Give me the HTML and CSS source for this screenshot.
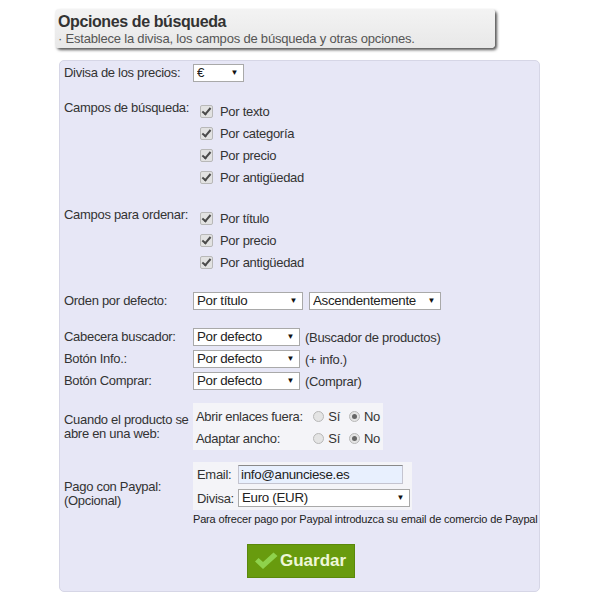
FILE: index.html
```html
<!DOCTYPE html>
<html lang="es">
<head>
    <meta charset="UTF-8">
    <meta name="viewport" content="width=device-width, initial-scale=1.0">
    <title>Opciones de búsqueda</title>
    <link rel="stylesheet" href="styles.css">
</head>
<body>
    <div class="page">
        <div class="header">
            <h2>Opciones de búsqueda</h2>
            <p>· Establece la divisa, los campos de búsqueda y otras opciones.</p>
        </div>

        <form class="panel">
            <div class="row">
                <label class="lbl">Divisa de los precios:</label>
                <div class="ctl">
                    <span class="sel w-eur"><select><option>€</option></select></span>
                </div>
            </div>

            <div class="row group first">
                <label class="lbl">Campos de búsqueda:</label>
                <div class="checks">
                    <label class="check"><span class="box"></span>Por texto</label>
                    <label class="check"><span class="box"></span>Por categoría</label>
                    <label class="check"><span class="box"></span>Por precio</label>
                    <label class="check"><span class="box"></span>Por antigüedad</label>
                </div>
            </div>

            <div class="row group">
                <label class="lbl">Campos para ordenar:</label>
                <div class="checks">
                    <label class="check"><span class="box"></span>Por título</label>
                    <label class="check"><span class="box"></span>Por precio</label>
                    <label class="check"><span class="box"></span>Por antigüedad</label>
                </div>
            </div>

            <div class="row group order">
                <label class="lbl">Orden por defecto:</label>
                <div class="ctl">
                    <span class="sel w-title"><select><option>Por título</option></select></span>
                    <span class="sel w-asc"><select><option>Ascendentemente</option></select></span>
                </div>
            </div>

            <div class="row group">
                <label class="lbl">Cabecera buscador:</label>
                <div class="ctl">
                    <span class="sel w-def"><select><option>Por defecto</option></select></span>
                    <span class="hint">(Buscador de productos)</span>
                </div>
            </div>
            <div class="row tight">
                <label class="lbl">Botón Info.:</label>
                <div class="ctl">
                    <span class="sel w-def"><select><option>Por defecto</option></select></span>
                    <span class="hint">(+ info.)</span>
                </div>
            </div>
            <div class="row tight">
                <label class="lbl">Botón Comprar:</label>
                <div class="ctl">
                    <span class="sel w-def"><select><option>Por defecto</option></select></span>
                    <span class="hint">(Comprar)</span>
                </div>
            </div>

            <div class="row boxed">
                <label class="lbl two">Cuando el producto se<br>abre en una web:</label>
                <div class="ctl">
                    <div class="subbox radios">
                        <div class="radio-row">
                            <span class="rlbl">Abrir enlaces fuera:</span>
                            <label class="radio"><span class="dot"></span>Sí</label>
                            <label class="radio on"><span class="dot"></span>No</label>
                        </div>
                        <div class="radio-row">
                            <span class="rlbl">Adaptar ancho:</span>
                            <label class="radio"><span class="dot"></span>Sí</label>
                            <label class="radio on"><span class="dot"></span>No</label>
                        </div>
                    </div>
                </div>
            </div>

            <div class="row boxed paypal">
                <label class="lbl two">Pago con Paypal:<br>(Opcional)</label>
                <div class="ctl stack">
                    <div class="subbox pay">
                        <label class="plbl">Email:</label>
                        <input type="text" class="email" value="info@anunciese.es">
                        <label class="plbl">Divisa:</label>
                        <span class="sel w-cur"><select><option>Euro (EUR)</option></select></span>
                    </div>
                    <div class="note">Para ofrecer pago por Paypal introduzca su email de comercio de Paypal</div>
                </div>
            </div>

            <div class="actions">
                <button type="button" class="save">
                    <svg width="24" height="18" viewBox="0 0 24 18">
                        <path d="M1 9.5 L4.5 6 L9 10 L19.5 0.5 L23.5 4 L9 17 Z" fill="#8fd24c"/>
                    </svg>
                    Guardar
                </button>
            </div>
        </form>
    </div>
</body>
</html>
```

FILE: styles.css
```css
body {
    margin: 0;
    font-family: "Liberation Sans", Arial, sans-serif;
    font-size: 13px;
    letter-spacing: -0.3px;
    color: #333;
    background-color: #fff;
}

.page {
    padding: 9px 0 0 55px;
}

.header {
    box-sizing: border-box;
    width: 440px;
    height: 39px;
    padding: 3px 3px 2px;
    background: linear-gradient(#f3f3f3, #e8e8e8);
    border-radius: 4px;
    box-shadow: 2px 2px 3px #555;
}

.header h2 {
    margin: 0;
    font-size: 16px;
    line-height: 20px;
    letter-spacing: -0.4px;
    color: #333;
}

.header p {
    margin: 0;
    font-size: 13px;
    line-height: 14px;
    letter-spacing: -0.2px;
    color: #555;
}

.panel {
    box-sizing: border-box;
    width: 481px;
    margin: 12px 0 0 4px;
    padding: 3px 4px 13px;
    background-color: #e7e7f6;
    border: 1px solid #d6d6e6;
    border-radius: 5px;
}

.row {
    display: grid;
    grid-template-columns: 129px 1fr;
    align-items: start;
}

.row.group {
    margin-top: 18px;
}

.row.group.first {
    margin-top: 17px;
}

.row.group.order {
    margin-top: 19px;
}

.row.tight {
    margin-top: 4px;
}

.row.boxed {
    margin-top: 13px;
}

.row.boxed.paypal {
    margin-top: 12px;
}

.lbl {
    line-height: 18px;
    white-space: nowrap;
}

.group .checks {
    margin-top: 1px;
}

.row .lbl.two {
    line-height: 14px;
    align-self: center;
}

.ctl {
    display: flex;
    align-items: center;
    gap: 5px;
}

.ctl.stack {
    flex-direction: column;
    align-items: flex-start;
    gap: 3px;
}

/* selects drawn flat with a small arrow */
.sel {
    position: relative;
    display: inline-block;
    height: 18px;
}

.sel select {
    appearance: none;
    box-sizing: border-box;
    width: 100%;
    height: 18px;
    margin: 0;
    padding: 0 0 0 3px;
    border: 1px solid #a9a9a9;
    background-color: #fff;
    font-family: "Liberation Sans", Arial, sans-serif;
    font-size: 13.33px;
    letter-spacing: -0.3px;
    line-height: 16px;
    color: #222;
}

.sel::after {
    content: "▼";
    position: absolute;
    right: 6px;
    top: 4px;
    font-size: 8px;
    line-height: 10px;
    color: #111;
    pointer-events: none;
}

.w-eur { width: 51px; }
.w-title { width: 110px; margin-right: 1px; }
.w-asc { width: 132px; }
.w-def { width: 107px; }
.w-cur { width: 172px; }

.hint {
    color: #333;
}

/* checkboxes */
.check {
    display: flex;
    align-items: center;
    height: 22px;
}

.check .box {
    box-sizing: border-box;
    position: relative;
    width: 13px;
    height: 13px;
    margin: 0 7px;
    background-color: #e2e2e2;
    border: 1px solid #b8b8b8;
    border-radius: 2px;
}

.check .box::after {
    content: "";
    position: absolute;
    left: 3px;
    top: 0;
    width: 3px;
    height: 7px;
    border: solid #4a4a4a;
    border-width: 0 2px 2px 0;
    transform: rotate(40deg);
}

/* radio box */
.subbox {
    box-sizing: border-box;
    background-color: #f4f4f8;
}

.radios {
    width: 190px;
    padding: 2px 3px 1px;
}

.radio-row {
    display: flex;
    align-items: center;
    height: 22px;
}

.rlbl {
    width: 119px;
    white-space: nowrap;
}

.radio {
    display: flex;
    align-items: center;
    margin-right: 9px;
}

.radio:last-child {
    margin-right: 0;
}

.radio .dot {
    box-sizing: border-box;
    position: relative;
    width: 11px;
    height: 11px;
    margin-right: 4px;
    border-radius: 50%;
    background-color: #e4e4e4;
    border: 1px solid #b8b8b8;
}

.radio.on .dot::after {
    content: "";
    position: absolute;
    left: 2px;
    top: 2px;
    width: 5px;
    height: 5px;
    border-radius: 50%;
    background-color: #666;
}

/* paypal */
.pay {
    display: grid;
    grid-template-columns: 41px auto;
    row-gap: 5px;
    align-items: center;
    width: 219px;
    padding: 3px 3px 3px 4px;
}

.email {
    box-sizing: border-box;
    width: 165px;
    height: 19px;
    margin: 0;
    padding: 0 2px;
    border: 1px solid #c4c4d0;
    border-top-color: #8a8a8a;
    background-color: #e8f0fe;
    font-family: "Liberation Sans", Arial, sans-serif;
    font-size: 13.33px;
    letter-spacing: -0.3px;
    color: #222;
}

.note {
    font-size: 11px;
    line-height: 13px;
    letter-spacing: -0.17px;
    color: #222;
    white-space: nowrap;
}

/* save button */
.actions {
    display: flex;
    justify-content: center;
    margin-top: 18px;
    padding-left: 3px;
}

.save {
    display: flex;
    align-items: center;
    gap: 2px;
    box-sizing: border-box;
    width: 108px;
    height: 34px;
    padding: 0 0 0 6px;
    background-color: #689b0e;
    border: 1px solid #5a880b;
    color: #eef7d8;
    font-family: "Liberation Sans", Arial, sans-serif;
    font-size: 17px;
    font-weight: bold;
    letter-spacing: 0;
    cursor: pointer;
}

.save:hover {
    background-color: #5c8a0c;
}
```
